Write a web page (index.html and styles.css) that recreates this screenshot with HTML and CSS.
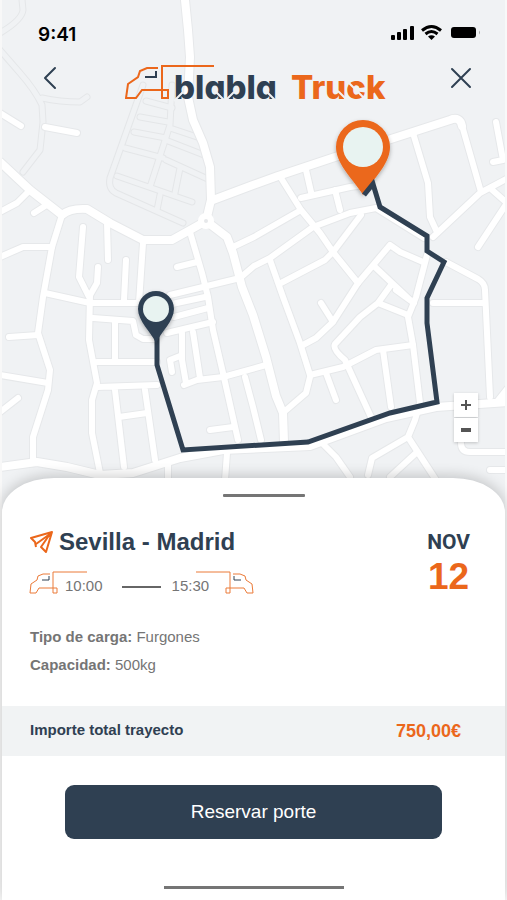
FILE: index.html
```
<!DOCTYPE html>
<html lang="es">
<head>
    <meta charset="UTF-8">
    <meta name="viewport" content="width=device-width, initial-scale=1.0">
    <title>blabla Truck - Sevilla - Madrid</title>
    <link rel="stylesheet" href="styles.css">
</head>
<body>
    <div class="screen">
        <section class="map">
            <svg class="map-canvas" viewBox="2 0 503 518" preserveAspectRatio="xMidYMin slice" aria-hidden="true">
                <defs>
                    <g id="paths">
                        <path d="M22 0L23 10Q22 20 0 33M0 50L20 73Q35 90 42 105L43 122L40 150L23 172M42 98Q60 102 80 102L87 97"/>
                        <path d="M143 85L110 178Q108 189 116 193L183 223M172 85L170 125L150 187M140 117L168 122M134 132L166 138M125 148L163 158M117 176L192 202"/>
                        <path d="M170 128L200 138M168 141L204 155M166 160L210 180M180 168L175 193M160 195L157 210M146 101L172 108"/>
                    </g>
                    <g id="streets">
                        <path d="M0 113L21 126M45 127L77 133M28 192L17 203L0 212M34 213L45 206M0 257L23 247H52"/>
                        <path d="M62 215L52 247L43 297L38 333L50 370L48 390L33 437V463"/>
                        <path d="M83 227L79 277L89 297L97 283L98 267M107 223L108 260M126 260L124 300M143 243L139 303"/>
                        <path d="M45 293L90 303H140M90 295L89 340L97 383L92 400V433L100 473M93 318L133 321L136 335L143 339H155M115 322V360M97 362H157"/>
                        <path d="M97 387L157 385M115 390L124 467M145 390L155 460M119 417L147 413"/>
                        <path d="M9 337L38 335M0 375L48 383M0 412L18 398"/>
                        <path d="M170 295L203 287L240 278L254 266L270 258L313 227L350 213L376 208L424 238"/>
                        <path d="M190 232L202 273L208 297L213 330L223 373L238 440M177 267L197 262"/>
                        <path d="M172 304L205 297M174 317L208 308M167 333L213 322M182 333V360L186 383M172 372L170 360L180 356M193 332L200 378M184 385L197 380L223 377L266 365"/>
                        <path d="M210 430L233 427M245 377L253 407L261 440M168 463V480M227 453L225 480"/>
                        <path d="M233 247L254 237L301 210M281 178L301 210L320 233L333 252L358 283L333 322L316 338L303 345M321 303L333 322"/>
                        <path d="M306 170L311 192M301 198L350 187L372 184M335 190L340 210M361 215L333 252L325 260L281 283"/>
                        <path d="M270 260L283 297L300 343L310 375L343 367L376 350L413 345M310 377L306 393L285 411M326 373L336 400"/>
                        <path d="M358 283L390 245L400 252L423 262M375 267L410 300M391 285L378 303L360 317L335 344Q332 349 345 360L371 417M378 303L408 315M396 290L414 303"/>
                        <path d="M427 255L416 297L408 317L413 345L420 403L415 420L408 437L436 480M383 350L391 407M408 437L372 458L368 475M416 453L390 477M321 442L336 457L350 477"/>
                        <path d="M413 133L428 183L430 217L436 230M461 122L481 192M433 237L480 193L510 177M490 188L507 203L478 247M496 122L503 160L493 162"/>
                        <path d="M446 262L478 279Q485 283 485 290L490 397M433 303H483M461 443Q461 452 470 452H510M490 470H510"/>
                    </g>
                    <g id="avenues">
                        <path d="M0 162L30 190L62 215Q70 208 87 209L110 223L143 240H172L190 230L206 221"/>
                        <path d="M185 0L188 30L190 57L188 97L193 120L203 143L210 167L211 200L206 221L227 237L233 253L242 287L253 315L266 357L276 396L283 413L284 442"/>
                        <path d="M213 200L253 185L278 176L335 157L391 139L450 120Q460 116 462 126"/>
                        <path d="M0 467L37 462L67 467L100 475L133 473L180 458L223 450L310 446L386 418L436 407L507 402M510 387L498 402"/>
                    </g>
                    <filter id="pinShadow" x="-30%" y="-20%" width="160%" height="150%">
                        <feDropShadow dx="0" dy="2" stdDeviation="2" flood-opacity="0.3"/>
                    </filter>
                </defs>

                <use href="#paths" class="path-edge"/>
                <use href="#paths" class="path-fill"/>
                <use href="#streets" class="street-edge"/>
                <use href="#avenues" class="avenue-edge"/>
                <use href="#streets" class="street-fill"/>
                <use href="#avenues" class="avenue-fill"/>
                <circle class="roundabout" cx="206" cy="221" r="5"/>

                <g filter="url(#pinShadow)">
                    <path class="pin-end" d="M363 195C355 181 336 165 336 147A27 27 0 0 1 390 147C390 165 371 181 363 195Z"/>
                    <circle class="pin-hole" cx="363" cy="147" r="20"/>
                </g>
                <path class="route" d="M364 195L373 184L380 207L427 236V251L444 262L427 298V323L437 402L390 413L308 442L183 450L157 365V335"/>
                <g filter="url(#pinShadow)">
                    <path class="pin-start" d="M156 343C151 332 138 321 138 309A18 18 0 0 1 174 309C174 321 161 332 156 343Z"/>
                    <circle class="pin-hole" cx="156" cy="309" r="13"/>
                </g>
            </svg>

            <div class="status-bar">
                <span class="clock">9:41</span>
                <svg class="status-icons" width="90" height="18" viewBox="0 0 90 18" aria-hidden="true">
                    <rect x="0" y="11" width="4" height="5" rx="1"/>
                    <rect x="6" y="8" width="4" height="8" rx="1"/>
                    <rect x="12" y="5" width="4" height="11" rx="1"/>
                    <rect x="19" y="2" width="4" height="14" rx="1"/>
                    <path class="wifi" d="M31 6.5Q40.5 -1.5 50 6.5M34.5 10Q40.5 5 46.5 10"/>
                    <path d="M37 12.5Q40.5 9.8 44 12.5L40.5 16Z"/>
                    <rect x="60" y="3" width="25" height="11" rx="3"/>
                    <path class="nub" d="M88 6.5Q90 8.5 88 10.5Z"/>
                </svg>
            </div>

            <header class="top-nav">
                <button class="icon-button" type="button" aria-label="Volver">
                    <svg width="24" height="24" viewBox="0 0 24 24"><path d="M17 2L7 12L17 22"/></svg>
                </button>
                <svg class="logo" width="262" height="50" viewBox="0 0 262 50" role="img" aria-label="blabla Truck">
                    <path class="logo-truck" d="M33 6H22L15 9L13 15L3 22L1 36H11L17 28H43V36H37V4H89"/>
                    <path class="logo-window" d="M31 9V15H20"/>
                    <text class="logo-blabla" x="49" y="37">blabla</text>
                    <text class="logo-name" x="166" y="37">Truck</text>
                    <!-- stencil cuts in the letters -->
                    <path class="logo-cuts" d="M58 30L49 39M91 30L100 39M109 30L100 39M142 30L151 39M213 29L222 38M223 20L239 36"/>
                </svg>
                <button class="icon-button" type="button" aria-label="Cerrar">
                    <svg width="24" height="24" viewBox="0 0 24 24"><path d="M3 3L21 21M21 3L3 21"/></svg>
                </button>
            </header>

            <div class="zoom-controls">
                <button type="button" aria-label="Acercar">
                    <svg width="10" height="10" viewBox="0 0 10 10"><path d="M5 0V10M0 5H10"/></svg>
                </button>
                <button type="button" aria-label="Alejar">
                    <svg class="minus" width="10" height="10" viewBox="0 0 10 10"><path d="M0 5H10"/></svg>
                </button>
            </div>
        </section>

        <main class="sheet">
            <div class="handle"></div>

            <div class="trip">
                <div>
                    <h1 class="trip-title">
                        <svg width="24" height="24" viewBox="0 0 24 24" aria-hidden="true">
                            <path d="M7 17L6 12L2 8L23 2L17 22L12 17L21 4L7 14"/>
                        </svg>
                        Sevilla - Madrid
                    </h1>
                    <div class="times">
                        <div class="time-from">
                            <svg class="mini-truck" width="60" height="24" viewBox="0 0 60 24" aria-hidden="true">
                                <path d="M21 3H14L9 5L8 9L2 13L1 22H7L10 17H28V22H24V1H58"/>
                                <path class="mini-window" d="M20 5V9H13"/>
                            </svg>
                            <span>10:00</span>
                        </div>
                        <div class="times-line"></div>
                        <div class="time-to">
                            <span>15:30</span>
                            <svg class="mini-truck" width="60" height="24" viewBox="0 0 60 24" aria-hidden="true">
                                <path d="M39 3H46L51 5L52 9L58 13L59 22H53L50 17H32V22H36V1H2"/>
                                <path class="mini-window" d="M40 5V9H47"/>
                            </svg>
                        </div>
                    </div>
                </div>
                <div class="date">
                    <span class="month">NOV</span>
                    <span class="day">12</span>
                </div>
            </div>

            <div class="details">
                <p><strong>Tipo de carga:</strong> Furgones</p>
                <p><strong>Capacidad:</strong> 500kg</p>
            </div>

            <div class="total">
                <span class="total-label">Importe total trayecto</span>
                <span class="total-price">750,00€</span>
            </div>

            <button class="reserve" type="button">Reservar porte</button>
            <div class="home-indicator"></div>
        </main>
    </div>
</body>
</html>
```
FILE: styles.css
```
* {
    box-sizing: border-box;
}
body {
    margin: 0;
    background: #f8f8f8;
    color: #757575;
    font-family: "Liberation Sans", Arial, sans-serif;
    font-size: 15px;
}
button {
    border: none;
    padding: 0;
    font-family: inherit;
    cursor: pointer;
}
svg {
    display: block;
    fill: none;
}
.screen {
    display: flex;
    flex-direction: column;
    min-height: 100vh;
    margin: 0 2px;
}

/* map */
.map {
    position: relative;
    flex: 1;
    min-height: 300px;
    overflow: hidden;
    background: #f0f2f4;
}
.map-canvas {
    position: absolute;
    top: 0;
    left: 0;
    width: 100%;
    height: 100%;
    stroke-linecap: round;
    stroke-linejoin: round;
}
.path-edge {
    stroke: #e4e6e8;
    stroke-width: 7px;
}
.path-fill {
    stroke: #f0f2f4;
    stroke-width: 5px;
}
.street-edge {
    stroke: #e6e8ea;
    stroke-width: 8px;
}
.street-fill {
    stroke: #fff;
    stroke-width: 6px;
}
.avenue-edge {
    stroke: #e6e8ea;
    stroke-width: 10px;
}
.avenue-fill {
    stroke: #fff;
    stroke-width: 8px;
}
.roundabout {
    fill: #e6e8ea;
    stroke: #fff;
    stroke-width: 6px;
}
.route {
    stroke: #2f4052;
    stroke-width: 5px;
    stroke-linecap: butt;
    stroke-linejoin: miter;
}
.pin-end {
    fill: #eb671b;
}
.pin-start {
    fill: #2f4052;
}
.pin-hole {
    fill: #e8f3f1;
}

/* header */
.status-bar {
    position: relative;
    display: flex;
    justify-content: space-between;
    align-items: center;
    padding: 22px 24px 0 36px;
}
.clock {
    color: #000;
    font-family: Inter, sans-serif;
    font-size: 19px;
    font-weight: 600;
    line-height: 26px;
}
.status-icons {
    fill: #000;
    margin-bottom: 4px;
}
.wifi {
    fill: none;
    stroke: #000;
    stroke-width: 3px;
}
.nub {
    fill: #aaa;
}
.top-nav {
    position: relative;
    display: flex;
    justify-content: space-between;
    align-items: flex-start;
    padding: 14px 32px 0 36px;
}
.icon-button {
    margin-top: 4px;
    background: none;
    stroke: #2f4052;
    stroke-width: 2px;
    stroke-linecap: round;
    stroke-linejoin: round;
}
.logo-truck {
    stroke: #eb671b;
    stroke-width: 2px;
}
.logo-window {
    stroke: #2f4052;
    stroke-width: 2px;
}
.logo text {
    font-family: Inter, sans-serif;
    font-size: 33px;
    font-weight: 800;
    font-feature-settings: "cv11";
}
.logo-blabla {
    fill: #2f4052;
}
.logo-name {
    fill: #eb671b;
}
.logo-cuts {
    stroke: #f0f2f4;
    stroke-width: 2px;
}
.zoom-controls {
    position: absolute;
    top: 393px;
    right: 27px;
    display: flex;
    flex-direction: column;
    gap: 1px;
}
.zoom-controls button {
    display: flex;
    align-items: center;
    justify-content: center;
    width: 24px;
    height: 24px;
    background: #fff;
    box-shadow: 0 1px 3px rgba(0, 0, 0, 0.2);
    stroke: #555;
    stroke-width: 2px;
}
.zoom-controls .minus {
    stroke-width: 4px;
}

/* bottom sheet */
.sheet {
    position: relative;
    margin-top: -40px;
    padding: 16px 0 11px;
    background: #fff;
    border-radius: 52px 52px 0 0 / 34px 34px 0 0;
    box-shadow: 0 -2px 14px rgba(0, 0, 0, 0.2);
}
.handle {
    width: 82px;
    height: 3px;
    margin-left: 44%;
    border-radius: 1px;
    background: #757575;
}
.trip {
    display: flex;
    justify-content: space-between;
    padding: 32px 35px 0 27px;
}
.trip-title {
    display: flex;
    align-items: center;
    gap: 6px;
    margin: 0;
    color: #2f4052;
    font-size: 24px;
    line-height: 26px;
    stroke: #eb671b;
    stroke-width: 2px;
    stroke-linejoin: round;
}
.times {
    display: flex;
    align-items: center;
    gap: 11px;
    margin-top: 16px;
}
.time-from,
.time-to {
    display: flex;
    align-items: center;
}
.time-from span {
    margin: 4px 8px 0 -24px;
}
.time-to span {
    margin: 4px -15px 0 0;
}
.mini-truck {
    stroke: #eb7a38;
    stroke-width: 1px;
}
.mini-window {
    stroke: #2f4052;
}
.times-line {
    width: 39px;
    height: 2px;
    margin-top: 8px;
    background: #666;
}
.date {
    display: flex;
    flex-direction: column;
    align-items: center;
    font-weight: bold;
}
.month {
    color: #2f4052;
    font-family: Roboto, sans-serif;
    font-size: 21px;
    line-height: 26px;
}
.day {
    color: #eb671b;
    font-size: 37px;
    line-height: 44px;
}
.details {
    padding: 24px 28px 27px;
}
.details p {
    margin: 0;
    line-height: 28px;
}
.total {
    display: flex;
    justify-content: space-between;
    align-items: center;
    height: 50px;
    padding: 0 44px 0 28px;
    background: #f1f3f4;
    font-weight: bold;
}
.total-label {
    color: #2f4052;
    padding-bottom: 4px;
}
.total-price {
    color: #eb671b;
    font-size: 18px;
}
.reserve {
    display: block;
    width: 75%;
    height: 54px;
    margin: 29px auto 47px;
    border-radius: 9px;
    background: #2f4052;
    color: #fff;
    font-size: 19px;
}
.home-indicator {
    width: 180px;
    height: 3px;
    margin: 0 auto;
    background: #757575;
}
```
